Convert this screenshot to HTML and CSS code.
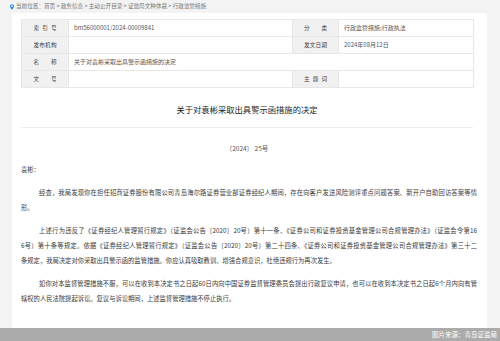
FILE: index.html
```html
<!DOCTYPE html>
<html lang="zh-CN">
<head>
<meta charset="utf-8">
<title>关于对袁彬采取出具警示函措施的决定</title>
<link rel="stylesheet" href="styles.css">
</head>
<body>
<div class="crumb">
  <svg class="pin" viewBox="0 0 10 14" width="4" height="6"><path d="M5 0C2.2 0 0 2.2 0 5c0 3.6 5 9 5 9s5-5.4 5-9c0-2.8-2.2-5-5-5zm0 7.2A2.2 2.2 0 1 1 5 2.8a2.2 2.2 0 0 1 0 4.4z" fill="#2f86d6"/></svg>
  <span>当前位置：首页 &gt; 政务信息 &gt; 主动公开目录 &gt; 证监局文种体裁 &gt; 行政监管措施</span>
</div>
<main class="panel">
  <table class="meta">
    <colgroup><col class="c1"><col class="c2"><col class="c3"><col class="c4"></colgroup>
    <tr><th><span class="lb">索引号</span></th><td>bm56000001/2024-00009841</td><th><span class="lb">分类</span></th><td>行政监管措施;行政执法</td></tr>
    <tr><th><span class="lb">发布机构</span></th><td></td><th><span class="lb">发文日期</span></th><td>2024年08月12日</td></tr>
    <tr><th><span class="lb">名称</span></th><td colspan="3">关于对袁彬采取出具警示函措施的决定</td></tr>
    <tr><th><span class="lb">文号</span></th><td></td><th><span class="lb">主题词</span></th><td></td></tr>
  </table>
  <h1 class="title">关于对袁彬采取出具警示函措施的决定</h1>
  <div class="docno">〔2024〕 25号</div>
  <div class="body">
    <p class="greet">袁彬：</p>
    <p class="para"><span class="ln first">经查，我局发现你在担任招商证券股份有限公司青岛海尔路证券营业部证券经纪人期间，存在向客户发送风险测评重点问题答案、新开户自助回访答案等情</span><span class="ln last">形。</span></p>
    <p class="para"><span class="ln first">上述行为违反了《证券经纪人管理暂行规定》（证监会公告〔2020〕20号）第十一条、《证券公司和证券投资基金管理公司合规管理办法》（证监会令第16</span><span class="ln">6号）第十条等规定。依据《证券经纪人管理暂行规定》（证监会公告〔2020〕20号）第二十四条、《证券公司和证券投资基金管理公司合规管理办法》第三十二</span><span class="ln last">条规定，我局决定对你采取出具警示函的监管措施。你应认真吸取教训、增强合规意识，杜绝违规行为再次发生。</span></p>
    <p class="para"><span class="ln first">如你对本监督管理措施不服，可以在收到本决定书之日起60日内向中国证券监督管理委员会提出行政复议申请，也可以在收到本决定书之日起6个月内向有管</span><span class="ln last">辖权的人民法院提起诉讼。复议与诉讼期间，上述监督管理措施不停止执行。</span></p>
  </div>
</main>
<footer class="source">图片来源：青岛证监局</footer>
</body>
</html>
```
FILE: styles.css
```css
html, body {
  margin: 0;
  padding: 0;
}
body {
  width: 500px;
  height: 341px;
  overflow: hidden;
  background: #f3f3f3;
  font-family: "Noto Sans CJK SC", "Noto Sans", sans-serif;
  color: #333;
  display: flex;
  flex-direction: column;
}
.crumb {
  height: 13px;
  padding-left: 10px;
  display: flex;
  align-items: center;
  gap: 2px;
  font-size: 5.6px;
  color: #777;
  line-height: 1;
}
.pin {
  display: block;
}
.panel {
  flex: 1;
  margin: 0 13px 0 12px;
  background: #fff;
  padding: 6px 10px 0 9px;
  min-height: 0;
}
.meta {
  width: 452px;
  border-collapse: collapse;
  table-layout: fixed;
  font-size: 6px;
  color: #555;
}
.c1 { width: 47px; }
.c2 { width: 224px; }
.c3 { width: 46px; }
.c4 { width: 135px; }
.meta th, .meta td {
  height: 16px;
  padding: 0;
  border: 1px solid #e7e7e7;
  line-height: 16px;
}
.meta th {
  background: #f1f1f1;
  font-weight: normal;
  text-align: center;
  color: #444;
  white-space: nowrap;
}
.meta td {
  padding-left: 5px;
  padding-right: 4px;
  white-space: nowrap;
}
.lb {
  display: inline-block;
  width: 23px;
  white-space: nowrap;
  text-align: justify;
  text-align-last: justify;
  vertical-align: top;
  font-size: 5.6px;
}
.title {
  width: 452px;
  margin: 0;
  padding: 16px 0 13px;
  font-size: 8.3px;
  line-height: 10px;
  font-weight: normal;
  color: #222;
  text-align: center;
  border-bottom: 1px solid #ececec;
}
.docno {
  width: 452px;
  margin-top: 15px;
  font-size: 6.5px;
  line-height: 10px;
  text-align: center;
  color: #555;
}
.body {
  width: 456px;
  font-size: 6.3px;
  line-height: 15px;
  color: #3a3a3a;
}
.body p {
  margin: 8px 0 0;
}
.body .greet {
  margin-top: 9px;
}
.ln {
  display: block;
  white-space: nowrap;
  text-align: justify;
  text-align-last: justify;
}
.ln.first {
  text-indent: 18px;
}
.ln.last {
  text-align-last: left;
}
.source {
  height: 13px;
  background: #ababab;
  color: #fff;
  font-size: 6.5px;
  line-height: 13px;
  text-align: right;
  padding-right: 3px;
}
```
